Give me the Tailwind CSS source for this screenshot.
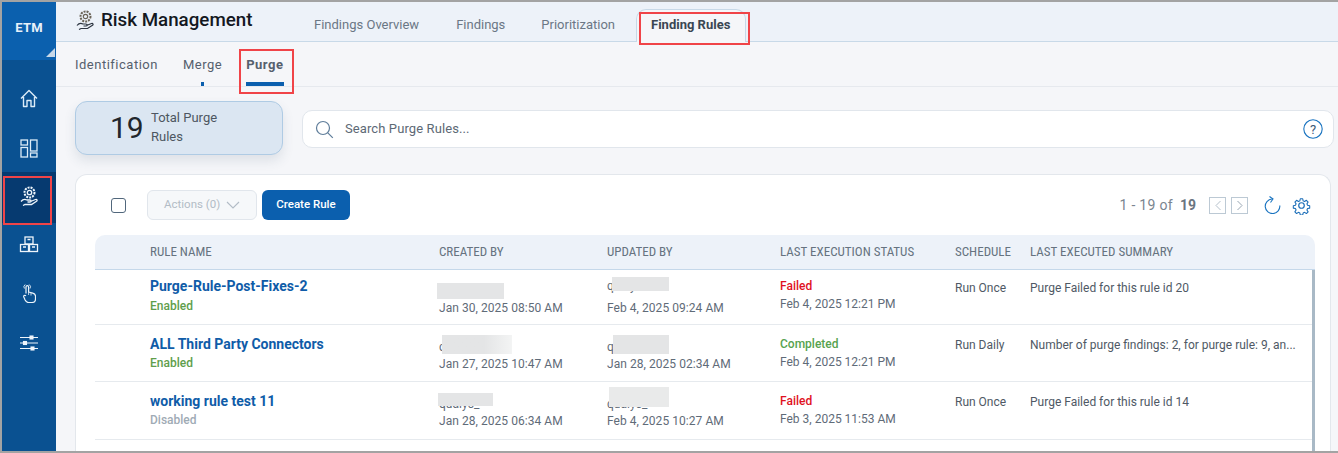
<!DOCTYPE html>
<html lang="en">
<head>
  <meta charset="UTF-8">
  <title>Risk Management</title>
  <script src="https://cdn.jsdelivr.net/npm/@tailwindcss/browser@4"></script>
</head>
<body class="w-[1338px] h-[453px] overflow-hidden bg-[#a3a3a3] font-['Roboto',sans-serif]">
  <div class="relative w-[1338px] h-[453px] pt-[2px] pl-[2px] pb-[2px]">
    <div class="flex h-full w-full bg-[#f5f6f9] overflow-hidden">

      <!-- Sidebar -->
      <aside class="w-[54px] shrink-0 bg-[#0a5191] flex flex-col text-white">
        <div class="relative h-[58px] bg-[#0b60ae] flex items-center justify-center">
          <span class="text-[13px] font-bold tracking-[0.2px] text-[#e8f1fa] mt-[-6px]">ETM</span>
          <span class="absolute right-[1px] bottom-[3px] w-0 h-0 border-l-[9px] border-b-[9px] border-l-transparent border-b-[#c8d8e8]"></span>
        </div>
        <div class="h-[57px] mt-[1px] flex items-center justify-center pt-[18px]">
          <svg width="18" height="19" viewBox="0 0 18 19" fill="none" stroke="#dcecf8" stroke-width="1.4" stroke-linejoin="round"><path d="M1 9.5 9 1.5l8 8M3.5 8v9.5h3.5v-6h4v6h3.5V8"/></svg>
        </div>
        <div class="h-[54px] flex items-center justify-center pt-[6px]">
          <svg width="18" height="19" viewBox="0 0 18 19" fill="none" stroke="#dcecf8" stroke-width="1.3"><rect x="1" y="1" width="6.5" height="5"/><rect x="1" y="8.5" width="6.5" height="9.5"/><rect x="10.5" y="1" width="6.5" height="11"/><rect x="10.5" y="14" width="6.5" height="4"/></svg>
        </div>
        <div class="h-[51px] bg-[#063a70] flex items-center justify-center pb-[3px]">
          <svg width="18" height="20" viewBox="0 0 18 20" fill="none" stroke="#eef5fb" stroke-width="1.3"><circle cx="9.5" cy="6.5" r="5" stroke-dasharray="2 1" stroke-width="2"/><circle cx="9.5" cy="6.5" r="2.2"/><path d="M1 15.500c2-2.500 4-2.500 6-1.500h3c1.500 0 1.500 2 0 2H7.500M10.500 15.500l5-2c1.500-.5 2 1 1 1.700l-5 3.300H5l-2 1"/></svg>
        </div>
        <div class="h-[52px] flex items-center justify-center pb-[9px]">
          <svg width="20" height="17" viewBox="0 0 20 17" fill="none" stroke="#eef5fb" stroke-width="1.300"><rect x="6" y="1" width="8" height="7"/><rect x="1.500" y="8.500" width="8" height="7"/><rect x="10.500" y="8.500" width="8" height="7"/><path d="M8.500 3.500h3M4 11h3M13 11h3"/></svg>
        </div>
        <div class="h-[48px] flex items-center justify-center pb-[12px]">
          <svg width="13" height="20" viewBox="0 0 13 20" fill="none" stroke="#eef5fb" stroke-width="1.200" stroke-linejoin="round"><path d="M3 10.500V4a1.300 1.300 0 0 1 2.600 0v5l4.200 1.200c1.500.4 2.700 1.300 2.700 3V16c0 2.300-1.300 3.500-3.500 3.500H5.500c-1.700 0-2.600-.8-3.400-2.500L.8 14c-.5-1.400.9-2.300 2.200-1.200"/><path d="M1.400 5.500a3 3 0 0 1 .8-4M6.200 1.500a3 3 0 0 1 .8 4" stroke-width=".9"/><path d="M5.600 9v3M8 9.800V12.500" stroke-width=".8"/></svg>
        </div>
        <div class="h-[48px] flex items-center justify-center pb-[9px]">
          <svg width="18" height="16" viewBox="0 0 18 16" fill="none" stroke="#eef5fb" stroke-width="1.100"><path d="M0 2.500h18M0 8h18M0 13.500h18"/><rect x="10" y="1" width="3" height="3" fill="#eef5fb"/><rect x="3.500" y="6.500" width="3" height="3" fill="#eef5fb"/><rect x="11" y="12" width="3" height="3" fill="#eef5fb"/></svg>
        </div>
      </aside>

      <main class="flex-1 min-w-0 flex flex-col">
        <!-- Top header -->
        <header class="h-[40px] shrink-0 bg-[#edf2f9] border-b border-[#c8d9e8] flex">
          <div class="w-[229px] pl-[20px] flex items-center gap-[7px] pb-[3px] shrink-0">
            <svg width="18" height="20" viewBox="0 0 18 20" fill="none" stroke="#2c3440" stroke-width="1.200"><circle cx="9.500" cy="6.500" r="5" stroke-dasharray="2 1" stroke-width="2" stroke="#6b6458"/><circle cx="9.500" cy="6.500" r="2.200" stroke="#6b6458"/><path d="M1 15.500c2-2.500 4-2.500 6-1.500h3c1.500 0 1.500 2 0 2H7.500M10.500 15.500l5-2c1.500-.5 2 1 1 1.700l-5 3.300H5l-2 1"/></svg>
            <span class="text-[18.750px] leading-none font-medium text-[#14181f]">Risk Management</span>
          </div>
          <nav class="flex text-[13px] text-[#6b7785]">
            <a class="ml-[29px] mt-[16px] leading-none">Findings Overview</a>
            <a class="ml-[37px] mt-[16px] leading-none">Findings</a>
            <a class="ml-[36px] mt-[16px] leading-none">Prioritization</a>
            <a class="ml-[21px] mt-[7px] w-[110px] h-[33px] -mb-px bg-[#f5f6f9] border border-b-0 border-[#c8d9e8] rounded-t-[10px] pt-[8px] pl-[14px] leading-none font-bold text-[#3a4653]">Finding Rules</a>
          </nav>
        </header>

        <!-- Sub tabs -->
        <div class="h-[45px] shrink-0 border-b border-[#e6e9ee] flex pl-[19px] text-[13px] tracking-[0.5px] text-[#55606d]">
          <a class="mt-[16px] leading-none">Identification</a>
          <a class="relative ml-[25px] mt-[16px] leading-none">Merge<span class="absolute left-[18px] top-[24px] w-[3px] h-[4px] bg-[#0b5fae]"></span></a>
          <a class="relative ml-[24px] mt-[16px] leading-none font-bold">Purge<span class="absolute left-0 top-[24px] w-[38px] h-[4px] bg-[#0b5fae]"></span></a>
        </div>

        <!-- Summary row -->
        <div class="h-[87px] shrink-0 flex pl-[19px]">
          <div class="mt-[14px] w-[208px] h-[54px] bg-[#dbe6f2] border border-[#afcbe4] rounded-[12px] shadow-[0_6px_12px_rgba(60,80,110,0.12)] flex items-center pl-[34px]">
            <span class="text-[30px] leading-none text-[#22262c] w-[40px] mt-[-1px]">19</span>
            <span class="text-[13px] leading-[19px] text-[#4d5661] w-[90px] ml-[1px] mt-[-2px]">Total Purge Rules</span>
          </div>
          <div class="ml-[19px] mt-[23px] w-[1032px] h-[38px] bg-white border border-[#e1e6ec] rounded-[10px] flex items-center pl-[12px] pr-[10px]">
            <svg width="19" height="19" viewBox="0 0 19 19" fill="none" stroke="#5f7d9a" stroke-width="1.200"><circle cx="8" cy="8" r="6.500"/><path d="m12.800 12.800 5 5"/></svg>
            <span class="ml-[11px] text-[13px] tracking-[0.1px] text-[#5d6975]">Search Purge Rules...</span>
            <svg class="ml-auto" width="20" height="20" viewBox="0 0 20 20" fill="none"><circle cx="10" cy="10" r="9.200" stroke="#1a74c0" stroke-width="1.100"/><text x="10" y="14.500" text-anchor="middle" font-size="13" fill="#3a5a78" font-family="Roboto">?</text></svg>
          </div>
        </div>

        <!-- Table card -->
        <section class="ml-[19px] w-[1256px] flex-1 bg-white border border-[#e3e7ec] border-b-0 rounded-t-[12px] pl-[19px] pr-[15px]">
          <div class="h-[60px] flex items-start">
            <span class="mt-[23px] ml-[16px] w-[15px] h-[15px] border border-[#51677c] rounded-[3px]"></span>
            <button class="mt-[15px] ml-[21px] w-[110px] h-[30px] border border-[#e1e6ec] bg-[#f6f8fa] rounded-[6px] flex items-center pl-[16px] text-[11.500px] text-[#b2bcc6]">
              Actions (0)
              <svg class="ml-[6px]" width="14" height="8" viewBox="0 0 14 8" fill="none" stroke="#b2bcc6" stroke-width="1.100"><path d="m1 1 6 6 6-6"/></svg>
            </button>
            <button class="mt-[15px] ml-[5px] w-[88px] h-[30px] bg-[#0b5fae] rounded-[6px] text-[11.500px] font-medium text-white">Create Rule</button>
            <div class="ml-auto mr-[4px] mt-[15px] h-[30px] flex items-center">
              <span class="text-[14px] text-[#7a8590] tracking-[0.3px] mr-[7px]">1 - 19 of</span>
              <span class="text-[14px] font-bold text-[#6b7580]">19</span>
              <span class="ml-[13px] w-[17px] h-[17px] border border-[#bcc9d4] flex items-center justify-center">
                <svg width="8" height="11" viewBox="0 0 8 11" fill="none" stroke="#b5c1cc"><path d="M6.500 1 2 5.500 6.500 10"/></svg>
              </span>
              <span class="ml-[5px] w-[17px] h-[17px] border border-[#bcc9d4] flex items-center justify-center">
                <svg width="8" height="11" viewBox="0 0 8 11" fill="none" stroke="#99a7b4"><path d="M1.500 1 6 5.500 1.500 10"/></svg>
              </span>
              <svg class="ml-[16px]" width="17" height="18" viewBox="0 0 17 18" fill="none" stroke="#1a74c0" stroke-width="1.100"><path d="M8 3A7.300 7.300 0 1 0 15.800 9.500"/><path d="M5.500.5 9 3 6.500 6.500"/></svg>
              <svg class="ml-[11px]" width="19" height="19" viewBox="0 0 24 24" fill="none" stroke="#1a6db8" stroke-width="1.500" stroke-linejoin="round"><circle cx="12" cy="12" r="3.500"/><path d="M10.300 2.500h3.400l.6 3 2 .9 2.600-1.700 2.400 2.400-1.700 2.600.9 2 3 .6v3.400l-3 .6-.9 2 1.700 2.600-2.400 2.400-2.600-1.700-2 .9-.6 3h-3.400l-.6-3-2-.9-2.600 1.700-2.400-2.400 1.700-2.600-.9-2-3-.6v-3.400l3-.6.900-2-1.700-2.600 2.400-2.400 2.600 1.700 2-.9z" transform="translate(1.200 1.200) scale(.9)"/></svg>
            </div>
          </div>

          <!-- Header row -->
          <div class="h-[35px] bg-[#edf2f9] border-b border-[#c5d8ea] rounded-t-[10px] grid grid-cols-[55px_289px_168px_173px_175px_75px_1fr] items-center text-[13px] text-[#667380] font-['Roboto_Condensed','Roboto',sans-serif]">
            <span></span><span>RULE NAME</span><span>CREATED BY</span><span>UPDATED BY</span><span>LAST EXECUTION STATUS</span><span>SCHEDULE</span><span>LAST EXECUTED SUMMARY</span>
          </div>

          <div class="border-r-[3px] border-[#a9b9c6]">
            <!-- Row 1 -->
            <div class="h-[55px] border-b border-[#e6eaee] grid grid-cols-[55px_289px_168px_173px_175px_75px_1fr] text-[12px] text-[#5f6b78]">
              <span></span>
              <div class="pt-[8px]"><p class="text-[14px] leading-[16px] font-bold text-[#0f5ca8]">Purge-Rule-Post-Fixes-2</p><p class="mt-[5px] leading-[14px] font-medium text-[#5f9e4c]">Enabled</p></div>
              <div class="relative pt-[31px] leading-[14px] tracking-[0.05px]"><span class="absolute left-[-2px] top-[13px] w-[67px] h-[16px] bg-[#e4e5e6]"></span>Jan 30, 2025 08:50 AM</div>
              <div class="relative leading-[14px] tracking-[0.05px]"><p class="pt-[9px]">qualys_1</p><p class="pt-[8px]">Feb 4, 2025 09:24 AM</p><span class="absolute left-[5px] top-[7px] w-[57px] h-[14px] bg-[#e4e5e6]"></span></div>
              <div class="pt-[9px] leading-[14px]"><p class="font-medium text-[#e0121f]">Failed</p><p class="mt-[4px]">Feb 4, 2025 12:21 PM</p></div>
              <div class="pt-[11px] leading-[14px] text-[#4f5965]">Run Once</div>
              <div class="pt-[11px] leading-[14px] text-[#4f5965] truncate">Purge Failed for this rule id 20</div>
            </div>
            <!-- Row 2 -->
            <div class="h-[57px] border-b border-[#e6eaee] grid grid-cols-[55px_289px_168px_173px_175px_75px_1fr] text-[12px] text-[#5f6b78]">
              <span></span>
              <div class="pt-[11px]"><p class="text-[14px] leading-[16px] font-bold text-[#0f5ca8]">ALL Third Party Connectors</p><p class="mt-[4px] leading-[14px] font-medium text-[#5f9e4c]">Enabled</p></div>
              <div class="relative leading-[14px] tracking-[0.05px]"><p class="pt-[15px]">qualys</p><p class="pt-[3px]">Jan 27, 2025 10:47 AM</p><span class="absolute left-[3px] top-[10px] w-[70px] h-[19px] bg-gradient-to-r from-[#e4e5e6] from-60% to-[#f3f4f4]"></span></div>
              <div class="relative leading-[14px] tracking-[0.05px]"><p class="pt-[15px]">qualys</p><p class="pt-[3px]">Jan 28, 2025 02:34 AM</p><span class="absolute left-[6px] top-[10px] w-[56px] h-[19px] bg-[#e4e5e6]"></span></div>
              <div class="pt-[12px] leading-[14px]"><p class="font-medium text-[#57a34f]">Completed</p><p class="mt-[4px]">Feb 4, 2025 12:21 PM</p></div>
              <div class="pt-[13px] leading-[14px] text-[#4f5965]">Run Daily</div>
              <div class="pt-[13px] leading-[14px] text-[#4f5965] truncate">Number of purge findings: 2, for purge rule: 9, an...</div>
            </div>
            <!-- Row 3 -->
            <div class="h-[58px] border-b border-[#e6eaee] grid grid-cols-[55px_289px_168px_173px_175px_75px_1fr] text-[12px] text-[#5f6b78]">
              <span></span>
              <div class="pt-[11px]"><p class="text-[14px] leading-[16px] font-bold text-[#0f5ca8]">working rule test 11</p><p class="mt-[4px] leading-[14px] font-medium text-[#9fabb5]">Disabled</p></div>
              <div class="relative leading-[14px] tracking-[0.05px]"><p class="pt-[15px]">qualys_</p><p class="pt-[3px]">Jan 28, 2025 06:34 AM</p><span class="absolute left-[-1px] top-[11px] w-[55px] h-[13px] bg-[#e4e5e6]"></span></div>
              <div class="relative leading-[14px] tracking-[0.05px]"><p class="pt-[15px]">qualys_</p><p class="pt-[3px]">Feb 4, 2025 10:27 AM</p><span class="absolute left-[2px] top-[5px] w-[60px] h-[20px] bg-[#e9eaea]"></span></div>
              <div class="pt-[12px] leading-[14px]"><p class="font-medium text-[#e0121f]">Failed</p><p class="mt-[4px]">Feb 3, 2025 11:53 AM</p></div>
              <div class="pt-[13px] leading-[14px] text-[#4f5965]">Run Once</div>
              <div class="pt-[13px] leading-[14px] text-[#4f5965] truncate">Purge Failed for this rule id 14</div>
            </div>
            <div class="h-[20px]"></div>
          </div>
        </section>
      </main>
    </div>

    <!-- Red annotation boxes over the screenshot -->
    <div class="absolute left-[3px] top-[176px] w-[49px] h-[49px] border-2 border-[#f04448]"></div>
    <div class="absolute left-[239px] top-[49px] w-[55px] h-[45px] border-2 border-[#f04448]"></div>
    <div class="absolute left-[639px] top-[12px] w-[111px] h-[33px] border-2 border-[#f04448]"></div>
  </div>
</body>
</html>
